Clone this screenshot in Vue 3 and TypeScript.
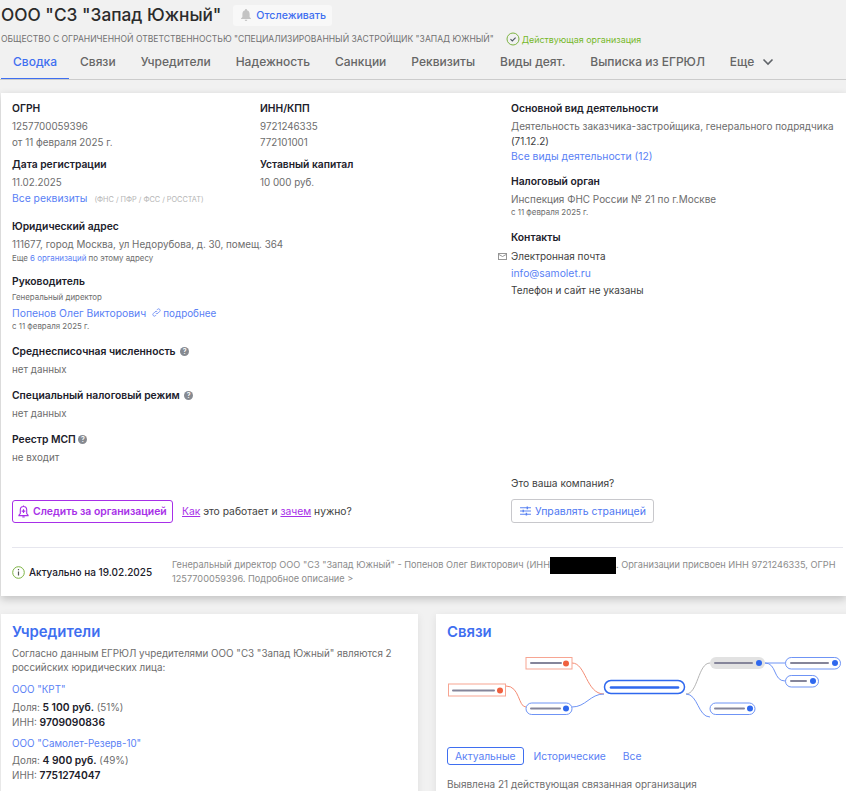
<script setup lang="ts">
const tabs = ['Сводка', 'Связи', 'Учредители', 'Надежность', 'Санкции', 'Реквизиты', 'Виды деят.', 'Выписка из ЕГРЮЛ']
</script>

<template>
  <div class="page">
    <header class="head">
      <div class="title-row">
        <h1>ООО "СЗ "Запад Южный"</h1>
        <button class="track">
          <svg width="14" height="14" viewBox="0 0 14 14"><path d="M7 1c-.6 0-1 .4-1 1v.3C4.300 2.800 3.400 4.200 3.400 6v3L2 10.500V11h10v-.5L10.600 9V6c0-1.800-.9-3.200-2.600-3.700V2c0-.6-.4-1-1-1zM5.700 11.800a1.300 1.300 0 0 0 2.600 0z" fill="#c4c4c4"/></svg>
          Отслеживать
        </button>
      </div>
      <div class="sub-row">
        <span class="full-name">ОБЩЕСТВО С ОГРАНИЧЕННОЙ ОТВЕТСТВЕННОСТЬЮ "СПЕЦИАЛИЗИРОВАННЫЙ ЗАСТРОЙЩИК "ЗАПАД ЮЖНЫЙ"</span>
        <span class="status">
          <svg width="14" height="14" viewBox="0 0 14 14" fill="none"><circle cx="7" cy="7" r="6" stroke="#7cb342"/><path d="M4.500 7.200l1.800 1.700 3.300-3.300" stroke="#4b5563" stroke-width="1.100"/></svg>
          Действующая организация
        </span>
      </div>
      <nav class="tabs">
        <a v-for="(t, i) in tabs" :key="t" class="tab" :class="{ active: i === 0 }">{{ t }}</a>
        <a class="tab more">Еще
          <svg width="12" height="8" viewBox="0 0 12 8" fill="none"><path d="M1.500 1.500L6 6l4.500-4.500" stroke="#5f6368" stroke-width="1.600"/></svg>
        </a>
      </nav>
    </header>

    <section class="summary">
      <div class="columns">
        <div class="left">
          <div class="pair">
            <div>
              <div class="label">ОГРН</div>
              <div class="val">1257700059396</div>
              <div class="val">от 11 февраля 2025 г.</div>
              <div class="label mt7">Дата регистрации</div>
              <div class="val">11.02.2025</div>
              <div class="val"><a class="link">Все реквизиты</a><span class="sources">(ФНС / ПФР / ФСС / РОССТАТ)</span></div>
            </div>
            <div>
              <div class="label">ИНН/КПП</div>
              <div class="val">9721246335</div>
              <div class="val">772101001</div>
              <div class="label mt7">Уставный капитал</div>
              <div class="val">10 000 руб.</div>
            </div>
          </div>
          <div class="label mt12">Юридический адрес</div>
          <div class="val">111677, город Москва, ул Недорубова, д. 30, помещ. 364</div>
          <div class="small">Еще <a class="link">6 организаций</a> по этому адресу</div>

          <div class="label mt10">Руководитель</div>
          <div class="small role">Генеральный директор</div>
          <div class="person">
            <a class="link">Попенов Олег Викторович</a>
            <a class="link more-link">
              <svg width="9" height="9" viewBox="0 0 10 10" fill="none" stroke="#6f8ff5" stroke-width="1"><path d="M4.200 5.800a1.700 1.700 0 0 0 2.400 0l2-2a1.700 1.700 0 0 0-2.400-2.400l-.8.8"/><path d="M5.800 4.200a1.700 1.700 0 0 0-2.400 0l-2 2a1.700 1.700 0 0 0 2.400 2.400l.8-.8"/></svg>
              подробнее
            </a>
          </div>
          <div class="small">с 11 февраля 2025 г.</div>

          <div class="label mt12">Среднесписочная численность <span class="hint wide">?</span></div>
          <div class="val">нет данных</div>
          <div class="label mt11">Специальный налоговый режим <span class="hint wide">?</span></div>
          <div class="val">нет данных</div>
          <div class="label mt10">Реестр МСП <span class="hint">?</span></div>
          <div class="val">не входит</div>
        </div>

        <div class="right">
          <div class="label">Основной вид деятельности</div>
          <div class="val">Деятельность заказчика-застройщика, генерального подрядчика</div>
          <div class="val dark">(71.12.2)</div>
          <div class="val tight"><a class="link">Все виды деятельности (12)</a></div>
          <div class="label mt11">Налоговый орган</div>
          <div class="val">Инспекция ФНС России № 21 по г.Москве</div>
          <div class="small">с 11 февраля 2025 г.</div>
          <div class="label mt12 contacts">Контакты</div>
          <div class="val dark mail-row line17">
            <svg class="mail" width="9" height="7" viewBox="0 0 10 8" fill="none" stroke="#888" stroke-width="1"><rect x=".5" y=".5" width="9" height="7"/><path d="M.5 1.500L5 4l4.500-2.500"/></svg>
            Электронная почта
          </div>
          <div class="val line17"><a class="link">info@samolet.ru</a></div>
          <div class="val dark line17">Телефон и сайт не указаны</div>
        </div>
      </div>

      <div class="actions">
        <div class="follow">
          <button class="follow-btn">
            <svg width="11" height="14" viewBox="0 0 12 15" fill="none" stroke="#a72fe8" stroke-width="1.200"><path d="M6 1.500c-2.200 0-3.500 1.500-3.500 3.700v4L1 11v.5h10V11L9.500 9.200v-4C9.500 3 8.200 1.500 6 1.500zM6 .5v1M4.700 13h2.600M6 4.500v4M4 6.500h4"/></svg>
            Следить за организацией
          </button>
          <span class="how"><a>Как</a> это работает и <a>зачем</a> нужно?</span>
        </div>
        <div class="own">
          <div class="own-q">Это ваша компания?</div>
          <button class="manage">
            <svg width="11" height="10" viewBox="0 0 12 11" fill="none" stroke="#5a83f2" stroke-width="1.200"><path d="M0 2h12M0 5.500h12M0 9h12"/><path d="M8 .5v3M3.500 4v3M7 7.500v3" stroke-width="1.600"/></svg>
            Управлять страницей
          </button>
        </div>
      </div>

      <div class="actual">
        <div class="actual-date">
          <svg width="13" height="13" viewBox="0 0 13 13" fill="none"><circle cx="6.500" cy="6.500" r="5.800" stroke="#7cb342"/><path d="M6.500 5.500v4M6.500 3v1.300" stroke="#555" stroke-width="1.200"/></svg>
          Актуально на 19.02.2025
        </div>
        <p class="actual-text">Генеральный директор ООО "СЗ "Запад Южный" - Попенов Олег Викторович (ИНН<span class="redact"></span>. Организации присвоен ИНН 9721246335, ОГРН 1257700059396. Подробное описание &gt;</p>
      </div>
    </section>

    <div class="cards">
      <section class="card founders">
        <h2>Учредители</h2>
        <p class="intro">Согласно данным ЕГРЮЛ учредителями ООО "СЗ "Запад Южный" являются 2 российских юридических лица:</p>
        <a class="link block">ООО "КРТ"</a>
        <div class="val">Доля: <b>5 100 руб.</b> (51%)</div>
        <div class="val">ИНН: <b>9709090836</b></div>
        <a class="link block second">ООО "Самолет-Резерв-10"</a>
        <div class="val">Доля: <b>4 900 руб.</b> (49%)</div>
        <div class="val">ИНН: <b>7751274047</b></div>
      </section>

      <section class="card links">
        <h2>Связи</h2>
        <svg class="graph" width="410" height="88" viewBox="0 0 410 88" fill="none">
          <g stroke-width="1">
            <path d="M136 16c14 0 14 31 32 31" stroke="#f48d75"/>
            <path d="M70 39c14 0 12 21 20 21" stroke="#f48d75"/>
            <path d="M136 60c14 0 18-13 32-13" stroke="#6f94f5"/>
            <path d="M250 47c12 0 12-31 24-31" stroke="#b5b5b5"/>
            <path d="M250 47c12 0 12 23 24 23" stroke="#6f94f5"/>
            <path d="M329 16h20" stroke="#6f94f5"/>
            <path d="M329 16c12 0 8 18 20 18" stroke="#6f94f5"/>
          </g>
          <!-- red nodes -->
          <rect x="90" y="10.500" width="46" height="11.500" fill="#fff" stroke="#f7a592"/>
          <path d="M95 16h30" stroke="#85859a" stroke-width="2" stroke-linecap="round"/>
          <circle cx="130" cy="16.500" r="3" fill="#f0603f"/>
          <rect x="12.500" y="37" width="57" height="12" fill="#fff" stroke="#f7a592"/>
          <path d="M17 43.500h41" stroke="#85859a" stroke-width="2" stroke-linecap="round"/>
          <circle cx="64" cy="43.500" r="3" fill="#f0603f"/>
          <!-- blue pills -->
          <rect x="90" y="56" width="46" height="11.500" rx="5.750" fill="#fff" stroke="#6f94f5"/>
          <path d="M95 61.500h29" stroke="#85859a" stroke-width="2" stroke-linecap="round"/>
          <circle cx="130" cy="61.500" r="3" fill="#2f68ee"/>
          <rect x="168.500" y="33.500" width="80" height="13" rx="6.500" fill="#fff" stroke="#2f68ee" stroke-width="1.500"/>
          <path d="M175 40.500h67" stroke="#2f68ee" stroke-width="2.600" stroke-linecap="round"/>
          <rect x="274" y="10" width="55" height="12" rx="6" fill="#e2e2e2"/>
          <path d="M279 16h37" stroke="#85859a" stroke-width="2" stroke-linecap="round"/>
          <circle cx="323" cy="16" r="3" fill="#2f68ee"/>
          <rect x="274" y="56" width="45" height="11.500" rx="5.750" fill="#fff" stroke="#6f94f5"/>
          <path d="M279 61.500h29" stroke="#85859a" stroke-width="2" stroke-linecap="round"/>
          <circle cx="314" cy="61.500" r="3" fill="#2f68ee"/>
          <rect x="349.500" y="10.500" width="55" height="11.500" rx="5.750" fill="#fff" stroke="#6f94f5"/>
          <path d="M355 16h37" stroke="#85859a" stroke-width="2" stroke-linecap="round"/>
          <circle cx="399" cy="16" r="3" fill="#2f68ee"/>
          <rect x="349.500" y="28.500" width="33" height="11.500" rx="5.750" fill="#fff" stroke="#6f94f5"/>
          <path d="M355 34h15" stroke="#85859a" stroke-width="2" stroke-linecap="round"/>
          <circle cx="377" cy="34" r="3" fill="#2f68ee"/>
        </svg>
        <div class="rel-tabs">
          <a class="rel active">Актуальные</a>
          <a class="rel">Исторические</a>
          <a class="rel">Все</a>
        </div>
        <p class="found">Выявлена 21 действующая связанная организация</p>
      </section>
    </div>
  </div>
</template>

<style>
html, body { margin: 0; background: #f1f1f1; overflow: hidden; }
</style>

<style scoped>
.page {
  width: 846px;
  height: 791px;
  overflow: hidden;
  background: #f1f1f1;
  font-family: Inter, "Noto Sans", sans-serif;
  font-size: 9.800px;
  line-height: 15px;
  color: #6d6d6d;
}
.head { padding-left: 1px; height: 93px; }
.title-row { display: flex; align-items: center; gap: 12px; height: 30px; }
h1 { margin: 0; font-size: 17.300px; font-weight: 500; color: #2b2b2b; line-height: 30px; white-space: nowrap; }
.track {
  display: flex; align-items: center; gap: 3px;
  height: 21px; padding: 0 6px; border: 0; border-radius: 3px;
  background: #f8f8f8; color: #3f6ff0;
  font: 500 10.600px Inter, sans-serif;
}
.sub-row { display: flex; align-items: center; gap: 12px; margin-top: 1px; height: 16px; }
.full-name { font-size: 8.570px; color: #727272; white-space: nowrap; }
.status { display: flex; align-items: center; gap: 2px; font-size: 8.900px; color: #76b82a; white-space: nowrap; }
.tabs { display: flex; gap: 25px; border-bottom: 1px solid #ccc; height: 33px; box-sizing: border-box; margin-left: -1px; padding-left: 13px; }
.tab { padding-top: 7px; font-size: 12px; font-weight: 500; color: #666; white-space: nowrap; box-sizing: border-box; height: 32px; }
.tab.active { color: #3f6ff0; border-bottom: 1px solid #3f6ff0; margin: 0 -14px 0 -12px; padding: 7px 13px 0 12px; width: 68px; }
.more { display: flex; gap: 8px; align-items: baseline; }

.summary {
  margin-left: 1px; height: 503px; box-sizing: border-box; padding: 8px 0 0 11px;
  background: #fff; box-shadow: 0 3px 8px rgba(0,0,0,.2);
  display: flex; flex-direction: column;
}
.columns { display: flex; height: 366px; flex: none; }
.left { width: 499px; flex: none; }
.pair { display: grid; grid-template-columns: 248px 1fr; }
.right { flex: 1; white-space: nowrap; }
.right .val { line-height: 15px; font-size: 9.950px; }
.right .tight { line-height: 14px; }
.right .line17 { line-height: 17px; }
.contacts { margin-bottom: 1px; }
.label { font-weight: 600; color: #20202a; font-size: 10.300px; line-height: 15px; margin-bottom: 3px; white-space: nowrap; }
.val { line-height: 15.500px; white-space: nowrap; }
.dark { color: #3e3e3e; }
.mt7 { margin-top: 7px; }
.mt10 { margin-top: 10px; }
.mt11 { margin-top: 11px; }
.mt12 { margin-top: 12px; }
.link { color: #5a7ff5; font-size: 10.350px; }
.small .link { font-size: inherit; }
.block { display: block; }
.sources { margin-left: 7px; font-size: 7.300px; color: #b5b5b5; }
.small { font-size: 7.900px; line-height: 11px; color: #6d6d6d; white-space: nowrap; }
.role { margin-bottom: 2px; }
.person { display: flex; align-items: center; gap: 6px; line-height: 16px; }
.more-link { display: flex; align-items: center; gap: 2px; font-size: 9.900px; }
.hint {
  display: inline-block; width: 9px; height: 9px; border-radius: 50%;
  background: #868a91; color: #fff;
  font-size: 7px; line-height: 9px; text-align: center; vertical-align: 1px;
}
.hint.wide { margin-left: 2px; }
.mail-row { position: relative; }
.mail { position: absolute; left: -13px; top: 5px; }

.actions { display: flex; height: 80px; flex: none; }
.follow { width: 499px; flex: none; display: flex; align-items: center; gap: 9px; margin-top: 33px; height: 23px; }
.follow-btn {
  display: flex; align-items: center; gap: 4px;
  height: 23px; padding: 0 4px 0 5px; box-sizing: border-box; width: 161px; flex: none;
  border: 1px solid #a72fe8; border-radius: 3px; background: #fff;
  color: #a72fe8; font: 600 10.400px Inter, sans-serif; white-space: nowrap;
}
.follow-btn svg, .manage svg { flex: none; }
.how { color: #3e3e3e; font-size: 10.300px; }
.how a { color: #a72fe8; text-decoration: underline; }
.own { margin-top: 9px; }
.own-q { color: #3e3e3e; line-height: 15px; margin-bottom: 8px; font-size: 10.200px; }
.manage {
  display: flex; align-items: center; gap: 4px;
  height: 24px; width: 143px; box-sizing: border-box; padding: 0 8px;
  border: 1px solid #c8c8cc; border-radius: 3px; background: #fff;
  color: #4f78f2; font: 400 10.500px Inter, sans-serif; white-space: nowrap;
}
.actual {
  display: flex; align-items: center; margin-right: 3px; padding-top: 10px;
  border-top: 1px solid #e6e6ee;
}
.actual-date { display: flex; align-items: center; gap: 4px; width: 160px; flex: none; color: #20202a; font-weight: 500; font-size: 10px; white-space: nowrap; }
.actual-text { margin: 0; font-size: 9.200px; line-height: 14px; color: #8b8b8b; }
.redact { display: inline-block; width: 66px; height: 17px; margin: -2px 0; background: #000; vertical-align: middle; }

.cards { display: flex; gap: 18px; padding: 18px 0 0 1px; }
.card { background: #fff; box-shadow: 0 2px 8px rgba(0,0,0,.08); height: 200px; box-sizing: border-box; padding: 8px 11px; }
.founders { width: 417px; flex: none; }
.links { flex: 1; }
h2 { margin: 0 0 5px; font-size: 14.900px; font-weight: 600; color: #3f6ff0; line-height: 20px; }
.intro { margin: 0 0 7px; line-height: 14px; }
.founders .val { line-height: 15px; }
.founders .link { margin-bottom: 3px; }
.founders .link.block { font-size: 9.800px; }
.founders .second { margin-top: 6px; margin-bottom: 2px; }
b { font-weight: 600; color: #20202a; font-size: 10.300px; }
.graph { display: block; margin: 2px 0 0 -11px; height: 88px; }
.rel-tabs { display: flex; gap: 3px; margin-top: 12px; }
.rel { padding: 0 6px; height: 18px; box-sizing: border-box; line-height: 16px; font-size: 10.300px; color: #5a7ff5; border: 1px solid transparent; }
.rel.active { padding: 0 7px; border-color: #3f6ff0; border-radius: 3px; }
.found { margin: 12px 0 0; font-size: 10px; }
</style>
